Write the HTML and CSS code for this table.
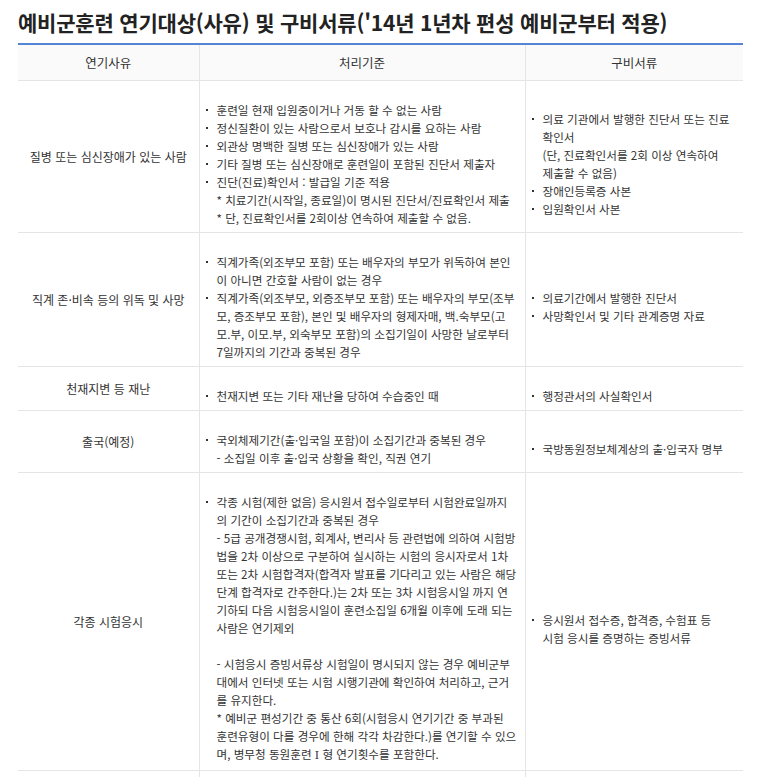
FILE: index.html
```html
<!DOCTYPE html>
<html lang="ko">
<head>
<meta charset="utf-8">
<title>예비군훈련 연기대상</title>
<link rel="stylesheet" href="styles.css">
</head>
<body>
<div class="page">
  <h2 class="title">예비군훈련 연기대상(사유) 및 구비서류('14년 1년차 편성 예비군부터 적용)</h2>
  <table class="grid">
    <colgroup>
      <col class="c1">
      <col class="c2">
      <col class="c3">
    </colgroup>
    <thead>
      <tr>
        <th>연기사유</th>
        <th>처리기준</th>
        <th>구비서류</th>
      </tr>
    </thead>
    <tbody>
      <tr>
        <td class="reason">질병 또는 심신장애가 있는 사람</td>
        <td>
          <ul class="list">
            <li>훈련일 현재 입원중이거나 거동 할 수 없는 사람</li>
            <li>정신질환이 있는 사람으로서 보호나 감시를 요하는 사람</li>
            <li>외관상 명백한 질병 또는 심신장애가 있는 사람</li>
            <li>기타 질병 또는 심신장애로 훈련일이 포함된 진단서 제출자</li>
            <li>진단(진료)확인서 : 발급일 기준 적용<br>* 치료기간(시작일, 종료일)이 명시된 진단서/진료확인서 제출<br>* 단, 진료확인서를 2회이상 연속하여 제출할 수 없음.</li>
          </ul>
        </td>
        <td>
          <ul class="list">
            <li>의료 기관에서 발행한 진단서 또는 진료<br>확인서<br>(단, 진료확인서를 2회 이상 연속하여<br>제출할 수 없음)</li>
            <li>장애인등록증 사본</li>
            <li>입원확인서 사본</li>
          </ul>
        </td>
      </tr>
      <tr>
        <td class="reason">직계 존·비속 등의 위독 및 사망</td>
        <td>
          <ul class="list">
            <li>직계가족(외조부모 포함) 또는 배우자의 부모가 위독하여 본인<br>이 아니면 간호할 사람이 없는 경우</li>
            <li>직계가족(외조부모, 외증조부모 포함) 또는 배우자의 부모(조부<br>모, 증조부모 포함), 본인 및 배우자의 형제자매, 백.숙부모(고<br>모.부, 이모.부, 외숙부모 포함)의 소집기일이 사망한 날로부터<br>7일까지의 기간과 중복된 경우</li>
          </ul>
        </td>
        <td>
          <ul class="list">
            <li>의료기간에서 발행한 진단서</li>
            <li>사망확인서 및 기타 관계증명 자료</li>
          </ul>
        </td>
      </tr>
      <tr>
        <td class="reason">천재지변 등 재난</td>
        <td>
          <ul class="list">
            <li>천재지변 또는 기타 재난을 당하여 수습중인 때</li>
          </ul>
        </td>
        <td>
          <ul class="list">
            <li>행정관서의 사실확인서</li>
          </ul>
        </td>
      </tr>
      <tr>
        <td class="reason">출국(예정)</td>
        <td>
          <ul class="list">
            <li>국외체제기간(출·입국일 포함)이 소집기간과 중복된 경우<br>- 소집일 이후 출·입국 상황을 확인, 직권 연기</li>
          </ul>
        </td>
        <td>
          <ul class="list">
            <li>국방동원정보체계상의 출·입국자 명부</li>
          </ul>
        </td>
      </tr>
      <tr>
        <td class="reason">각종 시험응시</td>
        <td>
          <ul class="list">
            <li>각종 시험(제한 없음) 응시원서 접수일로부터 시험완료일까지<br>의 기간이 소집기간과 중복된 경우<br>- 5급 공개경쟁시험, 회계사, 변리사 등 관련법에 의하여 시험방<br>법을 2차 이상으로 구분하여 실시하는 시험의 응시자로서 1차<br>또는 2차 시험합격자(합격자 발표를 기다리고 있는 사람은 해당<br>단계 합격자로 간주한다.)는 2차 또는 3차 시험응시일 까지 연<br>기하되 다음 시험응시일이 훈련소집일 6개월 이후에 도래 되는<br>사람은 연기제외<br><br>- 시험응시 증빙서류상 시험일이 명시되지 않는 경우 예비군부<br>대에서 인터넷 또는 시험 시행기관에 확인하여 처리하고, 근거<br>를 유지한다.<br>* 예비군 편성기간 중 통산 6회(시험응시 연기기간 중 부과된<br>훈련유형이 다를 경우에 한해 각각 차감한다.)를 연기할 수 있으<br>며, 병무청 동원훈련 <span class="roman">Ⅰ</span> 형 연기횟수를 포함한다.</li>
          </ul>
        </td>
        <td>
          <ul class="list">
            <li>응시원서 접수증, 합격증, 수험표 등<br>시험 응시를 증명하는 증빙서류</li>
          </ul>
        </td>
      </tr>
      <tr class="tail">
        <td></td>
        <td></td>
        <td></td>
      </tr>
    </tbody>
  </table>
</div>
</body>
</html>
```

FILE: styles.css
```css
html, body {
  margin: 0;
  padding: 0;
  background: #ffffff;
}

body {
  font-family: "Noto Sans CJK KR", "Noto Sans", sans-serif;
  color: #333333;
}

.page {
  padding: 8px 0 0 18px;
  width: 725px;
}

.title {
  margin: 0 0 7px;
  font-size: 21px;
  line-height: 28px;
  font-weight: 700;
  color: #222222;
  letter-spacing: -0.2px;
  white-space: nowrap;
}

.grid {
  width: 725px;
  border-collapse: collapse;
  table-layout: fixed;
  border-top: 2px solid #5584d4;
}

.c1 { width: 181px; }
.c2 { width: 326px; }
.c3 { width: 218px; }

.grid th {
  background: #fafafa;
  height: 35px;
  padding: 0;
  font-size: 12.5px;
  line-height: 18px;
  font-weight: 400;
  color: #333333;
  border-bottom: 1px solid #e5e5e5;
  border-right: 1px solid #e5e5e5;
  text-align: center;
  vertical-align: middle;
}

.grid td {
  padding: 5px;
  font-size: 11.6px;
  line-height: 18px;
  color: #333333;
  vertical-align: middle;
  border-bottom: 1px solid #e5e5e5;
  border-right: 1px solid #e5e5e5;
}

.grid th:last-child,
.grid td:last-child {
  border-right: none;
}

.grid td.reason {
  text-align: center;
  font-size: 12px;
}

.list {
  margin: 15px 0 0;
  padding: 0;
  list-style: none;
}

.list li {
  position: relative;
  padding-left: 12px;
  white-space: nowrap;
}

.list li::before {
  content: "";
  position: absolute;
  left: 1px;
  top: 8px;
  width: 2px;
  height: 2px;
  background: #333333;
}

.roman {
  font-family: "DejaVu Serif", "Liberation Serif", serif;
  font-size: 11px;
}

.tail td {
  height: 40px;
}
```
